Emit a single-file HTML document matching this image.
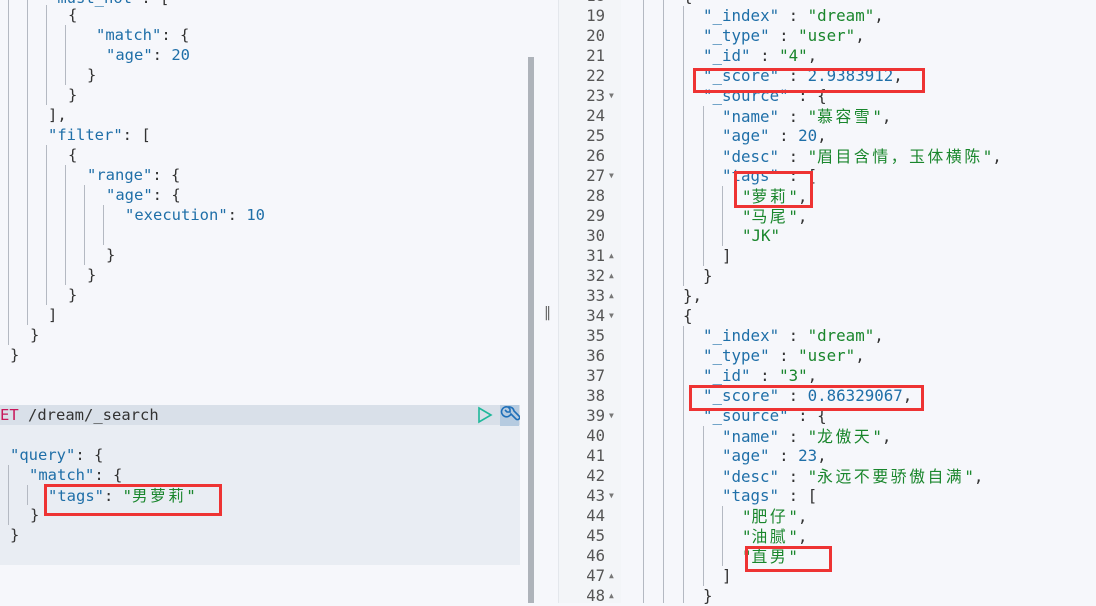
<!DOCTYPE html>
<html><head><meta charset="utf-8"><style>
*{margin:0;padding:0}
body{width:1096px;height:603px;overflow:hidden;background:#f6f7fb;position:relative;font-family:"DejaVu Sans Mono","Liberation Mono","Noto Sans CJK SC",monospace;}
.l{position:absolute;white-space:pre;line-height:20px;height:20px;color:#333}
.L{font-size:15.5px}
.R{font-size:15.8px}
.k{color:#1f6fa8}.s{color:#19862c}.n{color:#1f6fa8}.p{color:#333}
.c{font-family:"Noto Sans CJK SC",sans-serif;letter-spacing:2.6px}
.g{position:absolute;width:1px;background:#b4b9c2}
.box{position:absolute;border:3px solid #ee3333;box-sizing:border-box}
.num{position:absolute;width:40px;left:565px;text-align:right;font-size:15.6px;line-height:20px;color:#555;font-family:"DejaVu Sans Mono",monospace}
.ar{position:absolute;left:609px;font-size:8px;color:#777;line-height:20px}
</style></head><body>
<div style="position:absolute;left:0;top:405px;width:520px;height:20px;background:#d9e0e9"></div>
<div style="position:absolute;left:0;top:425px;width:520px;height:140px;background:#e9edf3"></div>
<div style="position:absolute;left:528px;top:57px;width:6px;height:546px;background:#aeb3ba"></div>
<div style="position:absolute;left:544px;top:305px;font-size:14px;color:#666;font-family:'DejaVu Sans',sans-serif">‖</div>
<div style="position:absolute;left:558px;top:0;width:1px;height:603px;background:#e4e7ec"></div>
<div style="position:absolute;left:559px;top:0;width:62px;height:603px;background:#f3f5f8"></div>

<div class="g" style="left:8px;top:0;height:345px"></div>
<div class="g" style="left:27px;top:0;height:325px"></div>
<div class="g" style="left:46px;top:5px;height:100px"></div>
<div class="g" style="left:46px;top:145px;height:160px"></div>
<div class="g" style="left:65px;top:25px;height:60px"></div>
<div class="g" style="left:65px;top:165px;height:120px"></div>
<div class="g" style="left:84px;top:185px;height:80px"></div>
<div class="g" style="left:103px;top:205px;height:40px"></div>
<div class="g" style="left:8px;top:465px;height:60px"></div>
<div class="g" style="left:27px;top:485px;height:20px"></div>

<div class="l L" style="left:48px;top:-12px"><span class="k">"must_not"</span>: [</div>
<div class="l L" style="left:68px;top:5px">{</div>
<div class="l L" style="left:96px;top:25px"><span class="k">"match"</span>: {</div>
<div class="l L" style="left:106px;top:45px"><span class="k">"age"</span>: <span class="n">20</span></div>
<div class="l L" style="left:87px;top:65px">}</div>
<div class="l L" style="left:68px;top:85px">}</div>
<div class="l L" style="left:48px;top:105px">],</div>
<div class="l L" style="left:48px;top:125px"><span class="k">"filter"</span>: [</div>
<div class="l L" style="left:68px;top:145px">{</div>
<div class="l L" style="left:87px;top:165px"><span class="k">"range"</span>: {</div>
<div class="l L" style="left:106px;top:185px"><span class="k">"age"</span>: {</div>
<div class="l L" style="left:125px;top:205px"><span class="k">"execution"</span>: <span class="n">10</span></div>
<div class="l L" style="left:106px;top:245px">}</div>
<div class="l L" style="left:87px;top:265px">}</div>
<div class="l L" style="left:68px;top:285px">}</div>
<div class="l L" style="left:48px;top:305px">]</div>
<div class="l L" style="left:30px;top:325px">}</div>
<div class="l L" style="left:10px;top:345px">}</div>
<div class="l L" style="left:0;top:405px"><span style="color:#c8175a">ET</span> <span style="color:#333">/dream/_search</span></div>
<div class="l L" style="left:10px;top:445px"><span class="k">"query"</span>: {</div>
<div class="l L" style="left:29px;top:465px"><span class="k">"match"</span>: {</div>
<div class="l L" style="left:48px;top:485px"><span class="k">"tags"</span>: <span class="s">"<span class="c">男萝莉</span>"</span></div>
<div class="l L" style="left:30px;top:505px">}</div>
<div class="l L" style="left:10px;top:525px">}</div>
<div class="box" style="left:44px;top:484px;width:178px;height:32px"></div>
<svg style="position:absolute;left:476px;top:406px" width="18" height="18"><path d="M3 2 L15 9 L3 16 Z" fill="none" stroke="#1fb89a" stroke-width="1.6"/></svg>
<div style="position:absolute;left:500px;top:405px;width:19px;height:21px;background:#b6cbe0"></div>
<svg style="position:absolute;left:500px;top:405px" width="20" height="20"><path d="M8 2 a5 5 0 1 0 3 7 l5 5 a2 2 0 0 0 3 -3 l-5 -5 a5 5 0 0 0 -6 -4 l2 2 0 3 -3 0 -2 -2" fill="none" stroke="#1f6fb8" stroke-width="1.6"/></svg>

<div class="g" style="left:643px;top:0;height:603px"></div>
<div class="g" style="left:663px;top:0;height:603px"></div>
<div class="g" style="left:683px;top:6px;height:280px"></div>
<div class="g" style="left:683px;top:326px;height:277px"></div>
<div class="g" style="left:703px;top:106px;height:160px"></div>
<div class="g" style="left:703px;top:426px;height:160px"></div>
<div class="g" style="left:722px;top:186px;height:60px"></div>
<div class="g" style="left:722px;top:506px;height:60px"></div>

<div class="num" style="top:-14px">18</div>
<div class="num" style="top:6px">19</div><div class="num" style="top:26px">20</div><div class="num" style="top:46px">21</div><div class="num" style="top:66px">22</div><div class="num" style="top:86px">23</div><div class="num" style="top:106px">24</div><div class="num" style="top:126px">25</div><div class="num" style="top:146px">26</div><div class="num" style="top:166px">27</div><div class="num" style="top:186px">28</div><div class="num" style="top:206px">29</div><div class="num" style="top:226px">30</div><div class="num" style="top:246px">31</div><div class="num" style="top:266px">32</div><div class="num" style="top:286px">33</div><div class="num" style="top:306px">34</div><div class="num" style="top:326px">35</div><div class="num" style="top:346px">36</div><div class="num" style="top:366px">37</div><div class="num" style="top:386px">38</div><div class="num" style="top:406px">39</div><div class="num" style="top:426px">40</div><div class="num" style="top:446px">41</div><div class="num" style="top:466px">42</div><div class="num" style="top:486px">43</div><div class="num" style="top:506px">44</div><div class="num" style="top:526px">45</div><div class="num" style="top:546px">46</div><div class="num" style="top:566px">47</div><div class="num" style="top:586px">48</div>
<div class="ar" style="top:86px">▼</div><div class="ar" style="top:166px">▼</div><div class="ar" style="top:246px">▲</div><div class="ar" style="top:266px">▲</div><div class="ar" style="top:286px">▲</div><div class="ar" style="top:306px">▼</div><div class="ar" style="top:406px">▼</div><div class="ar" style="top:486px">▼</div><div class="ar" style="top:566px">▲</div><div class="ar" style="top:586px">▲</div>

<div class="l R" style="left:683px;top:-14px">{</div>
<div class="l R" style="left:703px;top:6px"><span class="k">"_index"</span> : <span class="s">"dream"</span>,</div>
<div class="l R" style="left:703px;top:26px"><span class="k">"_type"</span> : <span class="s">"user"</span>,</div>
<div class="l R" style="left:703px;top:46px"><span class="k">"_id"</span> : <span class="s">"4"</span>,</div>
<div class="l R" style="left:703px;top:66px"><span class="k">"_score"</span> : <span class="n">2.9383912</span>,</div>
<div class="l R" style="left:703px;top:86px"><span class="k">"_source"</span> : {</div>
<div class="l R" style="left:722px;top:106px"><span class="k">"name"</span> : <span class="s">"<span class="c">慕容雪</span>"</span>,</div>
<div class="l R" style="left:722px;top:126px"><span class="k">"age"</span> : <span class="n">20</span>,</div>
<div class="l R" style="left:722px;top:146px"><span class="k">"desc"</span> : <span class="s">"<span class="c">眉目含情，玉体横陈</span>"</span>,</div>
<div class="l R" style="left:722px;top:166px"><span class="k">"tags"</span> : [</div>
<div class="l R" style="left:742px;top:186px"><span class="s">"<span class="c">萝莉</span>"</span>,</div>
<div class="l R" style="left:742px;top:206px"><span class="s">"<span class="c">马尾</span>"</span>,</div>
<div class="l R" style="left:742px;top:226px"><span class="s">"JK"</span></div>
<div class="l R" style="left:722px;top:246px">]</div>
<div class="l R" style="left:703px;top:266px">}</div>
<div class="l R" style="left:683px;top:286px">},</div>
<div class="l R" style="left:683px;top:306px">{</div>
<div class="l R" style="left:703px;top:326px"><span class="k">"_index"</span> : <span class="s">"dream"</span>,</div>
<div class="l R" style="left:703px;top:346px"><span class="k">"_type"</span> : <span class="s">"user"</span>,</div>
<div class="l R" style="left:703px;top:366px"><span class="k">"_id"</span> : <span class="s">"3"</span>,</div>
<div class="l R" style="left:703px;top:386px"><span class="k">"_score"</span> : <span class="n">0.86329067</span>,</div>
<div class="l R" style="left:703px;top:406px"><span class="k">"_source"</span> : {</div>
<div class="l R" style="left:722px;top:426px"><span class="k">"name"</span> : <span class="s">"<span class="c">龙傲天</span>"</span>,</div>
<div class="l R" style="left:722px;top:446px"><span class="k">"age"</span> : <span class="n">23</span>,</div>
<div class="l R" style="left:722px;top:466px"><span class="k">"desc"</span> : <span class="s">"<span class="c">永远不要骄傲自满</span>"</span>,</div>
<div class="l R" style="left:722px;top:486px"><span class="k">"tags"</span> : [</div>
<div class="l R" style="left:742px;top:506px"><span class="s">"<span class="c">肥仔</span>"</span>,</div>
<div class="l R" style="left:742px;top:526px"><span class="s">"<span class="c">油腻</span>"</span>,</div>
<div class="l R" style="left:742px;top:546px"><span class="s">"<span class="c">直男</span>"</span></div>
<div class="l R" style="left:722px;top:566px">]</div>
<div class="l R" style="left:703px;top:586px">}</div>

<div class="box" style="left:693px;top:68px;width:232px;height:25px"></div>
<div class="box" style="left:734px;top:171px;width:79px;height:37px"></div>
<div class="box" style="left:689px;top:385px;width:235px;height:26px"></div>
<div class="box" style="left:745px;top:546px;width:87px;height:26px"></div>
</body></html>
